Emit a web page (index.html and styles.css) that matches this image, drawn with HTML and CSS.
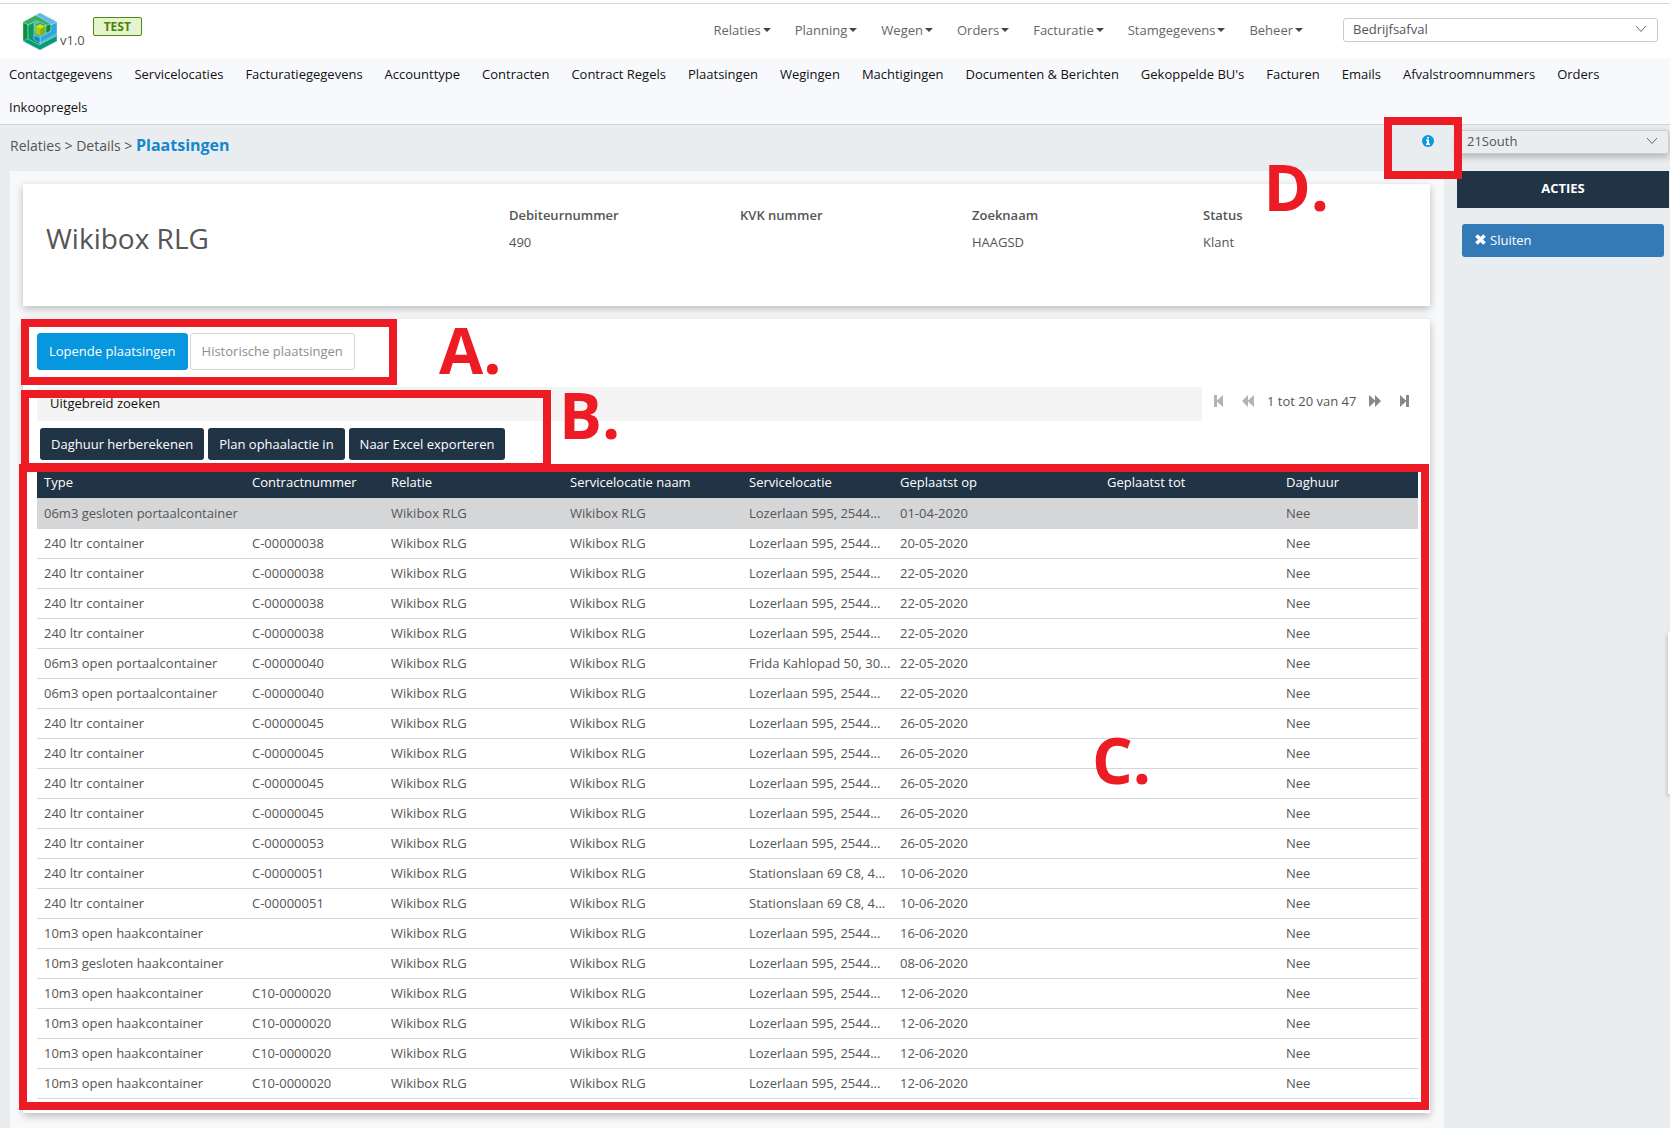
FILE: index.html
```html
<!DOCTYPE html>
<html lang="nl">
<head>
<meta charset="utf-8">
<title>Plaatsingen - Wikibox RLG</title>
<link rel="stylesheet" href="styles.css">
</head>
<body>
<svg width="0" height="0" class="symbols" aria-hidden="true">
  <symbol id="chevron" viewBox="0 0 12 8"><path d="M1 1l5 5.500 5-5.500" fill="none" stroke="#666"/></symbol>
  <symbol id="end" viewBox="0 0 10 12"><path d="M0 0l6 5.500V0h3v12H6V6.500L0 12z"/></symbol>
  <symbol id="forward" viewBox="0 0 12 12"><path d="M0 0l6 5.500V0l6 6-6 6V6.500L0 12z"/></symbol>
</svg>

<header class="topbar">
  <a class="logo" href="#" aria-label="Home">
    <svg width="34" height="37" viewBox="0 0 34 37" aria-hidden="true">
      <path d="M17 0l17 9v19l-17 9L0 28V9z" fill="#4fb894"/>
      <g stroke="#d8f2ea" stroke-width=".4">
        <path d="M0 9l5 2.500V26l7 3.500v5L0 28z" fill="#0c8f3c"/>
        <path d="M0 28l5-2.500 12 6L34 22.500V28l-17 9z" fill="#079a82"/>
        <path d="M5 12l6-3v16.500l6 3.500v3L5 26z" fill="#089a68"/>
        <path d="M0 9l13-7 15 8.500-5 2.500-10-5.500L5 12z" fill="#3bab62"/>
        <path d="M28 10.500V18l-5 2.500V13z" fill="#0e8a38"/>
        <path d="M13 2l4-2 17 9-6 3-1-1.500z" fill="#5fb9ea"/>
        <path d="M34 9v11.500L17 30v-6l11-6v-6z" fill="#2ea6e1"/>
        <path d="M11 22l6 2.500V30l-6-3.500z" fill="#0d86d2"/>
        <path d="M11 12l6-3 6 3-6 3z" fill="#12a88e"/>
      </g>
      <path d="M12.500 13.500l4.500-2.500 5 2.500-4.500 2.500z" fill="#d9e012"/>
      <path d="M12.500 13.500l5 2.500v6.500l-5-2.500z" fill="#b3cc0a"/>
      <path d="M22 13.500L17.500 16v6.500L22 20z" fill="#88b010"/>
    </svg>
  </a>
  <span class="version">v1.0</span>
  <span class="env">TEST</span>
  <nav class="mainnav" aria-label="Hoofdmenu">
    <a href="#">Relaties<i class="caret"></i></a>
    <a href="#">Planning<i class="caret"></i></a>
    <a href="#">Wegen<i class="caret"></i></a>
    <a href="#">Orders<i class="caret"></i></a>
    <a href="#">Facturatie<i class="caret"></i></a>
    <a href="#">Stamgegevens<i class="caret"></i></a>
    <a href="#">Beheer<i class="caret"></i></a>
  </nav>
  <div class="select select-top">
    <select aria-label="Business unit"><option>Bedrijfsafval</option></select>
    <svg class="chev"><use href="#chevron"/></svg>
  </div>
</header>

<nav class="subnav" aria-label="Relatie">
  <a href="#">Contactgegevens</a>
  <a href="#">Servicelocaties</a>
  <a href="#">Facturatiegegevens</a>
  <a href="#">Accounttype</a>
  <a href="#">Contracten</a>
  <a href="#">Contract Regels</a>
  <a href="#">Plaatsingen</a>
  <a href="#">Wegingen</a>
  <a href="#">Machtigingen</a>
  <a href="#">Documenten &amp; Berichten</a>
  <a href="#">Gekoppelde BU's</a>
  <a href="#">Facturen</a>
  <a href="#">Emails</a>
  <a href="#">Afvalstroomnummers</a>
  <a href="#">Orders</a>
  <a href="#">Inkoopregels</a>
</nav>

<div class="page">
  <div class="content">
    <div class="crumbbar">
      <div class="crumbs"><a href="#">Relaties</a> &gt; <a href="#">Details</a> &gt; <strong>Plaatsingen</strong></div>
      <button class="info" type="button" aria-label="Informatie">
        <svg width="12" height="12" viewBox="0 0 12 12"><circle cx="6" cy="6" r="6" fill="#0b98de"/><path d="M5 2h2v1.600H5zM4 4.600h3v3.800h1V10H4V8.400h1V6H4z" fill="#fff"/></svg>
      </button>
      <div class="mark mark-d"><b>D.</b></div>
    </div>

    <main class="panel">
      <section class="card summary">
        <h1>Wikibox RLG</h1>
        <dl><dt>Debiteurnummer</dt><dd>490</dd></dl>
        <dl><dt>KVK nummer</dt><dd></dd></dl>
        <dl><dt>Zoeknaam</dt><dd>HAAGSD</dd></dl>
        <dl><dt>Status</dt><dd>Klant</dd></dl>
      </section>

      <section class="card list">
        <div class="tabs">
          <button class="tab active" type="button">Lopende plaatsingen</button>
          <button class="tab" type="button">Historische plaatsingen</button>
          <div class="mark mark-a"><b>A.</b></div>
        </div>

        <div class="tools">
          <div class="searchrow">
            <a class="search" href="#">Uitgebreid zoeken</a>
            <div class="pager">
              <button class="disabled" type="button" aria-label="Eerste"><svg class="flip" width="10" height="12"><use href="#end"/></svg></button>
              <button class="disabled" type="button" aria-label="Vorige"><svg class="flip" width="12" height="12"><use href="#forward"/></svg></button>
              <span>1 tot 20 van 47</span>
              <button type="button" aria-label="Volgende"><svg width="12" height="12"><use href="#forward"/></svg></button>
              <button type="button" aria-label="Laatste"><svg width="10" height="12"><use href="#end"/></svg></button>
            </div>
          </div>
          <div class="buttons">
            <button type="button">Daghuur herberekenen</button>
            <button type="button">Plan ophaalactie in</button>
            <button type="button">Naar Excel exporteren</button>
          </div>
          <div class="mark mark-b"><b>B.</b></div>
        </div>

        <div class="tablewrap">
          <table>
            <colgroup><col class="c-type"><col class="c-contract"><col class="c-name"><col class="c-name"><col class="c-loc"><col class="c-date"><col class="c-name"><col class="c-contract"></colgroup>
            <thead>
              <tr><th>Type</th><th>Contractnummer</th><th>Relatie</th><th>Servicelocatie naam</th><th>Servicelocatie</th><th>Geplaatst op</th><th>Geplaatst tot</th><th>Daghuur</th></tr>
            </thead>
            <tbody>
              <tr class="selected"><td>06m3 gesloten portaalcontainer</td><td></td><td>Wikibox RLG</td><td>Wikibox RLG</td><td>Lozerlaan 595, 2544...</td><td>01-04-2020</td><td></td><td>Nee</td></tr>
              <tr><td>240 ltr container</td><td>C-00000038</td><td>Wikibox RLG</td><td>Wikibox RLG</td><td>Lozerlaan 595, 2544...</td><td>20-05-2020</td><td></td><td>Nee</td></tr>
              <tr><td>240 ltr container</td><td>C-00000038</td><td>Wikibox RLG</td><td>Wikibox RLG</td><td>Lozerlaan 595, 2544...</td><td>22-05-2020</td><td></td><td>Nee</td></tr>
              <tr><td>240 ltr container</td><td>C-00000038</td><td>Wikibox RLG</td><td>Wikibox RLG</td><td>Lozerlaan 595, 2544...</td><td>22-05-2020</td><td></td><td>Nee</td></tr>
              <tr><td>240 ltr container</td><td>C-00000038</td><td>Wikibox RLG</td><td>Wikibox RLG</td><td>Lozerlaan 595, 2544...</td><td>22-05-2020</td><td></td><td>Nee</td></tr>
              <tr><td>06m3 open portaalcontainer</td><td>C-00000040</td><td>Wikibox RLG</td><td>Wikibox RLG</td><td>Frida Kahlopad 50, 30...</td><td>22-05-2020</td><td></td><td>Nee</td></tr>
              <tr><td>06m3 open portaalcontainer</td><td>C-00000040</td><td>Wikibox RLG</td><td>Wikibox RLG</td><td>Lozerlaan 595, 2544...</td><td>22-05-2020</td><td></td><td>Nee</td></tr>
              <tr><td>240 ltr container</td><td>C-00000045</td><td>Wikibox RLG</td><td>Wikibox RLG</td><td>Lozerlaan 595, 2544...</td><td>26-05-2020</td><td></td><td>Nee</td></tr>
              <tr><td>240 ltr container</td><td>C-00000045</td><td>Wikibox RLG</td><td>Wikibox RLG</td><td>Lozerlaan 595, 2544...</td><td>26-05-2020</td><td></td><td>Nee</td></tr>
              <tr><td>240 ltr container</td><td>C-00000045</td><td>Wikibox RLG</td><td>Wikibox RLG</td><td>Lozerlaan 595, 2544...</td><td>26-05-2020</td><td></td><td>Nee</td></tr>
              <tr><td>240 ltr container</td><td>C-00000045</td><td>Wikibox RLG</td><td>Wikibox RLG</td><td>Lozerlaan 595, 2544...</td><td>26-05-2020</td><td></td><td>Nee</td></tr>
              <tr><td>240 ltr container</td><td>C-00000053</td><td>Wikibox RLG</td><td>Wikibox RLG</td><td>Lozerlaan 595, 2544...</td><td>26-05-2020</td><td></td><td>Nee</td></tr>
              <tr><td>240 ltr container</td><td>C-00000051</td><td>Wikibox RLG</td><td>Wikibox RLG</td><td>Stationslaan 69 C8, 4...</td><td>10-06-2020</td><td></td><td>Nee</td></tr>
              <tr><td>240 ltr container</td><td>C-00000051</td><td>Wikibox RLG</td><td>Wikibox RLG</td><td>Stationslaan 69 C8, 4...</td><td>10-06-2020</td><td></td><td>Nee</td></tr>
              <tr><td>10m3 open haakcontainer</td><td></td><td>Wikibox RLG</td><td>Wikibox RLG</td><td>Lozerlaan 595, 2544...</td><td>16-06-2020</td><td></td><td>Nee</td></tr>
              <tr><td>10m3 gesloten haakcontainer</td><td></td><td>Wikibox RLG</td><td>Wikibox RLG</td><td>Lozerlaan 595, 2544...</td><td>08-06-2020</td><td></td><td>Nee</td></tr>
              <tr><td>10m3 open haakcontainer</td><td>C10-0000020</td><td>Wikibox RLG</td><td>Wikibox RLG</td><td>Lozerlaan 595, 2544...</td><td>12-06-2020</td><td></td><td>Nee</td></tr>
              <tr><td>10m3 open haakcontainer</td><td>C10-0000020</td><td>Wikibox RLG</td><td>Wikibox RLG</td><td>Lozerlaan 595, 2544...</td><td>12-06-2020</td><td></td><td>Nee</td></tr>
              <tr><td>10m3 open haakcontainer</td><td>C10-0000020</td><td>Wikibox RLG</td><td>Wikibox RLG</td><td>Lozerlaan 595, 2544...</td><td>12-06-2020</td><td></td><td>Nee</td></tr>
              <tr><td>10m3 open haakcontainer</td><td>C10-0000020</td><td>Wikibox RLG</td><td>Wikibox RLG</td><td>Lozerlaan 595, 2544...</td><td>12-06-2020</td><td></td><td>Nee</td></tr>
            </tbody>
          </table>
          <div class="mark mark-c"><b>C.</b></div>
        </div>
      </section>
    </main>
  </div>

  <aside class="side">
    <div class="select select-side">
      <select aria-label="Vestiging"><option>21South</option></select>
      <svg class="chev"><use href="#chevron"/></svg>
    </div>
    <h2>ACTIES</h2>
    <button class="close" type="button"><svg width="11" height="11" viewBox="0 0 11 11" aria-hidden="true"><path d="M1.500 1.500l8 8M9.500 1.500l-8 8" stroke="#fff" stroke-width="3.600"/></svg>Sluiten</button>
  </aside>
</div>
<div class="drawer"></div>
</body>
</html>
```
FILE: styles.css
```css
* { box-sizing: border-box; }

body {
  margin: 0;
  min-height: 100vh;
  display: flex;
  flex-direction: column;
  background: #e9edf0;
  color: #555;
  font: 13px/20px "Open Sans", "Noto Sans", sans-serif;
  overflow-x: hidden;
}

a { color: inherit; text-decoration: none; }
button, select { font: inherit; color: inherit; margin: 0; cursor: pointer; }
.symbols { position: absolute; }

/* Top bar */
.topbar {
  display: flex;
  align-items: flex-start;
  height: 58px;
  padding: 9px 12px 0 23px;
  background: linear-gradient(#d6d6d6, #d6d6d6) 0 3px / 100% 1px no-repeat #fff;
}
.logo { margin-top: 4px; height: 37px; }
.logo svg { display: block; }
.version { margin: 21px 8px 0 3px; }
.env {
  margin-top: 8px;
  width: 49px;
  border: 1px solid #4b8b10;
  border-radius: 2px;
  background: #e5f3cf;
  color: #4b8508;
  font-weight: 700;
  font-size: 12px;
  line-height: 17px;
  text-align: center;
}
.mainnav { display: flex; gap: 24px; margin: 11px 40px 0 auto; color: #666; }
.mainnav a { display: flex; align-items: center; gap: 2px; }
.caret { border: 4px solid transparent; border-top-color: #444; border-bottom: 0; }

.select { position: relative; }
.select select {
  display: block;
  width: 100%;
  height: 24px;
  padding: 0 24px 2px 9px;
  border: 1px solid #ccc;
  border-radius: 3px;
  background: none;
  appearance: none;
}
.chev { position: absolute; right: 11px; top: 7px; width: 12px; height: 8px; pointer-events: none; }
.select-top { width: 315px; margin-top: 9px; }

/* Relation menu */
.subnav {
  display: flex;
  flex-wrap: wrap;
  column-gap: 22px;
  padding: 0 9px;
  background: #f8f9fc;
  border-bottom: 1px solid #d3d3d3;
  color: #111;
  line-height: 33px;
}

/* Page columns */
.page {
  flex: 1;
  display: grid;
  grid-template-columns: 1fr 212px;
  gap: 13px;
  padding: 0 1px 0 10px;
}
.content { display: flex; flex-direction: column; min-width: 0; }
.crumbbar {
  position: relative;
  display: flex;
  justify-content: space-between;
  height: 46px;
  padding: 10px 10px 0 0;
}
.crumbs { font-size: 14px; line-height: 20px; }
.crumbs strong { font-size: 16px; color: #1487cf; }
.info { height: 12px; padding: 0; border: 0; background: none; }
.info svg { display: block; }

.panel {
  flex: 1;
  display: flex;
  flex-direction: column;
  gap: 13px;
  padding: 13px 14px 15px 13px;
  background: #f8f9fb;
}
.card { background: #fff; box-shadow: 0 3px 8px rgba(0, 0, 0, .25); }

.summary {
  display: grid;
  grid-template-columns: 463fr 231fr 232fr 231fr 227fr;
  min-height: 122px;
  padding: 21px 0 0 23px;
}
.summary h1 { margin: 14px 0 0; font-size: 28px; line-height: 38px; font-weight: 400; }
.summary dl { margin: 0; }
.summary dt { font-weight: 600; }
.summary dd { margin: 7px 0 0; }

/* List */
.list { padding: 14px 13px 14px 14px; }
.tabs { position: relative; display: flex; gap: 2px; }
.tab {
  height: 37px;
  padding: 0 11px 2px;
  border: 1px solid #d5d5d5;
  border-radius: 3px;
  background: #fff;
  color: #8e8e8e;
}
.tab.active { border-color: #0797df; background: #0797df; color: #fff; }

.tools { position: relative; margin-top: 17px; }
.searchrow { display: flex; gap: 11px; }
.search {
  flex: 1;
  height: 34px;
  padding: 6px 13px;
  background: #f4f4f4;
  color: #111;
}
.pager { display: flex; align-items: center; height: 28px; padding-right: 7px; gap: 13px; }
.pager span { width: 89px; white-space: nowrap; }
.pager button { display: flex; padding: 0; border: 0; background: none; fill: #888; }
.pager button:first-child { margin-right: 6px; }
.pager button:last-child { margin-left: 6px; }
.pager .disabled { fill: #b3b3b3; }
.flip { transform: scaleX(-1); }

.buttons { display: flex; gap: 4px; padding: 7px 3px; }
.buttons button {
  height: 32px;
  padding: 0 11px;
  border: 0;
  border-radius: 3px;
  background: #213446;
  color: #fff;
}

.tablewrap { position: relative; }
table { width: 100%; table-layout: fixed; border-collapse: separate; border-spacing: 0; }
.c-type { width: 208px; }
.c-contract { width: 139px; }
.c-name { width: 179px; }
.c-loc { width: 151px; }
.c-date { width: 207px; }
th, td {
  height: 30px;
  padding: 0 0 2px 7px;
  border-bottom: 1px solid #d5d6d8;
  text-align: left;
  font-weight: 400;
  white-space: nowrap;
  overflow: hidden;
}
th { height: 32px; background: #213446; color: #fff; }
.selected td { background: #d5d6d8; }

/* Side column */
.side { padding-top: 5px; }
.select-side select { box-shadow: 0 3px 7px rgba(0, 0, 0, .25); }
.side h2 {
  margin: 17px 0 16px;
  background: #213446;
  color: #fff;
  font-size: 13px;
  font-weight: 700;
  line-height: 35px;
  padding-bottom: 2px;
  text-align: center;
}
.close {
  display: flex;
  align-items: center;
  gap: 4px;
  width: 202px;
  height: 33px;
  margin-left: 5px;
  padding: 0 13px 2px;
  border: 0;
  border-radius: 3px;
  background: #337ab7;
  color: #fff;
}

/* Collapsed drawer on the window edge */
.drawer {
  position: fixed;
  right: 0;
  top: 632px;
  width: 2px;
  height: 162px;
  background: #fff;
  box-shadow: 0 2px 4px rgba(0, 0, 0, .4);
}

/* Instruction callouts */
.mark { position: absolute; z-index: 2; border: 8px solid #ed1c24; pointer-events: none; }
.mark b { position: absolute; color: #ed1c24; font-size: 64px; line-height: 64px; }
.mark-a { left: -16px; top: -14px; width: 376px; height: 66px; }
.mark-a b { left: 410px; top: -9px; }
.mark-b { left: -16px; top: 3px; width: 530px; height: 81px; }
.mark-b b { left: 530px; top: -15px; }
.mark-c { inset: -3px -12px -11px -18px; }
.mark-c b { left: 1065px; top: 256px; }
.mark-d { right: -18px; top: -8px; width: 78px; height: 62px; }
.mark-d b { right: 125px; top: 30px; }
```
